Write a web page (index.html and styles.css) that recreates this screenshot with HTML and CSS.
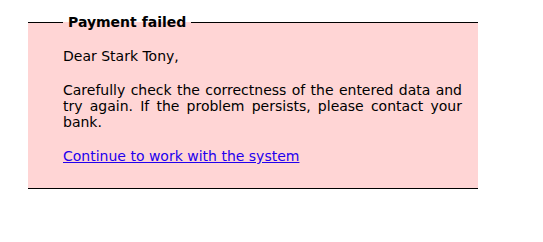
FILE: index.html
```html
<!DOCTYPE html>
<html lang="en">
<head>
  <meta charset="UTF-8" />
  <title>Payment failed</title>
  <link rel="stylesheet" href="styles.css">
</head>
<body>
  <fieldset class="notice">
    <legend class="notice-title">Payment failed</legend>
    <p class="greeting">Dear Stark Tony,</p>
    <p class="message">Carefully check the correctness of the entered data and try again. If the problem persists, please contact your bank.</p>
    <p class="actions"><a href="#">Continue to work with the system</a></p>
  </fieldset>
</body>
</html>
```

FILE: styles.css
```css
html, body {
  margin: 0;
  padding: 0;
  background-color: #fff;
  font-family: "DejaVu Sans", Verdana, sans-serif;
  font-size: 14px;
  color: #000;
}

.notice {
  width: 450px;
  box-sizing: border-box;
  margin: 14px 0 0 28px;
  padding: 0 16px 0 35px;
  border: none;
  border-top: 1px solid #000;
  border-bottom: 1px solid #000;
  background-color: #ffd5d5;
  min-width: 0;
}

.notice-title {
  padding: 0 5px;
  font-weight: bold;
  font-size: 14px;
}

.greeting {
  margin: 18px 0 0;
  line-height: 16px;
}

.message {
  margin: 18px 0 0;
  line-height: 16px;
  text-align: justify;
}

.actions {
  margin: 18px 0 24px;
  line-height: 16px;
}

.actions a {
  color: #2200ee;
}
```
